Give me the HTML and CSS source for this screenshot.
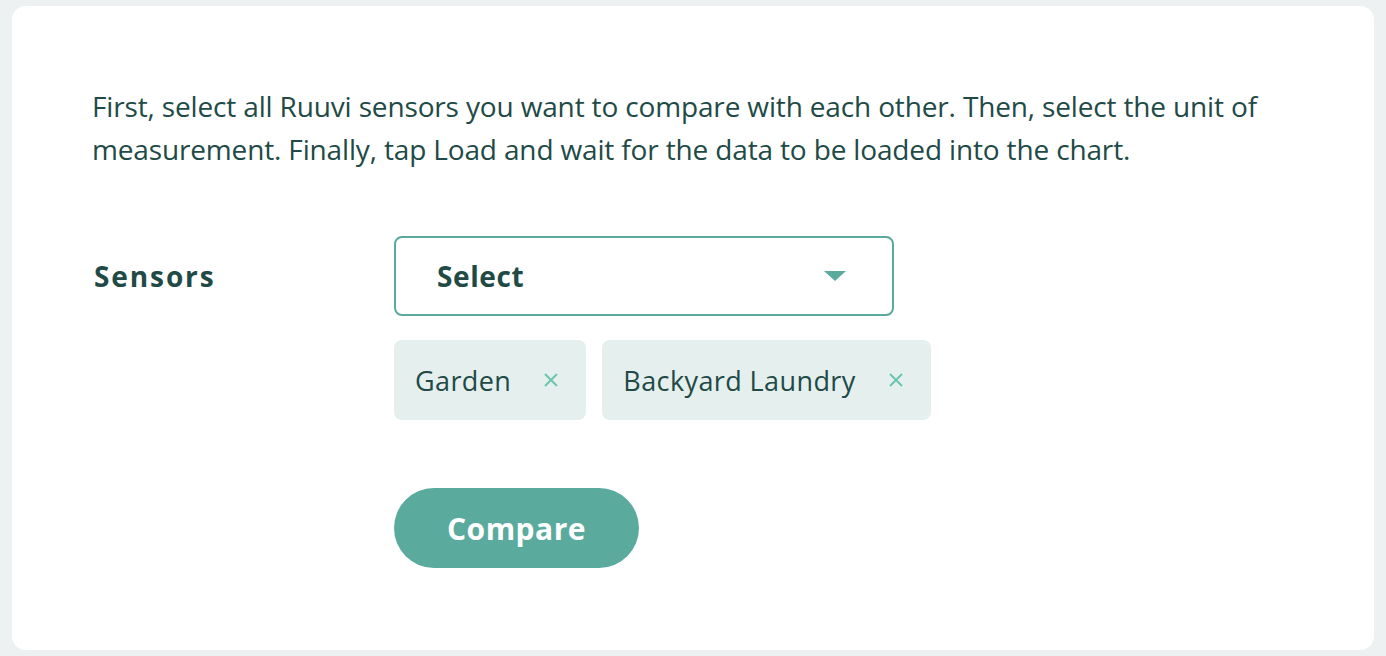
FILE: index.html
```html
<!DOCTYPE html>
<html lang="en">
<head>
  <meta charset="UTF-8" />
  <title>Compare sensors</title>
  <link rel="stylesheet" href="styles.css">
</head>
<body>
  <div class="card">
    <p class="intro">First, select all Ruuvi sensors you want to compare with each other. Then, select the unit of measurement. Finally, tap Load and wait for the data to be loaded into the chart.</p>

    <div class="form-row">
      <div class="label">Sensors</div>
      <div class="field">
        <div class="select">
          <span>Select</span>
          <span class="caret"></span>
        </div>
        <div class="chips">
          <div class="chip">Garden
            <svg class="remove" width="16" height="16" viewBox="0 0 16 16"><path d="M2 2L14 14M14 2L2 14" /></svg>
          </div>
          <div class="chip">Backyard Laundry
            <svg class="remove" width="16" height="16" viewBox="0 0 16 16"><path d="M2 2L14 14M14 2L2 14" /></svg>
          </div>
        </div>
        <button class="compare-btn">Compare</button>
      </div>
    </div>
  </div>
</body>
</html>
```

FILE: styles.css
```css
body {
  margin: 0;
  padding: 6px 12px;
  background-color: #edf1f1;
  font-family: 'Open Sans', 'Lato', sans-serif;
  color: #214a47;
}

.card {
  background-color: #ffffff;
  border-radius: 14px;
  height: 644px;
  box-sizing: border-box;
  padding: 79px 80px 0 80px;
}

.intro {
  margin: 0;
  font-size: 28px;
  line-height: 43px;
  letter-spacing: -0.15px;
  max-width: 1190px;
}

.form-row {
  display: flex;
  margin-top: 65px;
}

.label {
  width: 300px;
  padding-left: 2px;
  font-size: 28px;
  font-weight: bold;
  letter-spacing: 1.9px;
  line-height: 80px;
}

.field {
  display: flex;
  flex-direction: column;
  align-items: flex-start;
}

.select {
  width: 500px;
  height: 80px;
  box-sizing: border-box;
  border: 2px solid #5aab9e;
  border-radius: 8px;
  display: flex;
  align-items: center;
  justify-content: space-between;
  padding: 0 46px 0 41px;
  font-size: 28px;
  font-weight: bold;
  letter-spacing: 0.6px;
}

.caret {
  width: 0;
  height: 0;
  border-left: 11px solid transparent;
  border-right: 11px solid transparent;
  border-top: 10px solid #5aab9e;
}

.chips {
  display: flex;
  gap: 16px;
  margin-top: 24px;
}

.chip {
  height: 80px;
  display: flex;
  align-items: center;
  padding: 0 27px 0 21px;
  background-color: #e5efed;
  border-radius: 8px;
  font-size: 27px;
  letter-spacing: 0.4px;
}

.remove {
  margin-left: 32px;
  stroke: #6cc5b0;
  stroke-width: 2;
  fill: none;
}

.compare-btn {
  margin-top: 68px;
  width: 245px;
  height: 80px;
  border: none;
  border-radius: 40px;
  background-color: #5aab9e;
  color: #ffffff;
  font-family: inherit;
  font-size: 30px;
  font-weight: bold;
  letter-spacing: 0.5px;
}
```
